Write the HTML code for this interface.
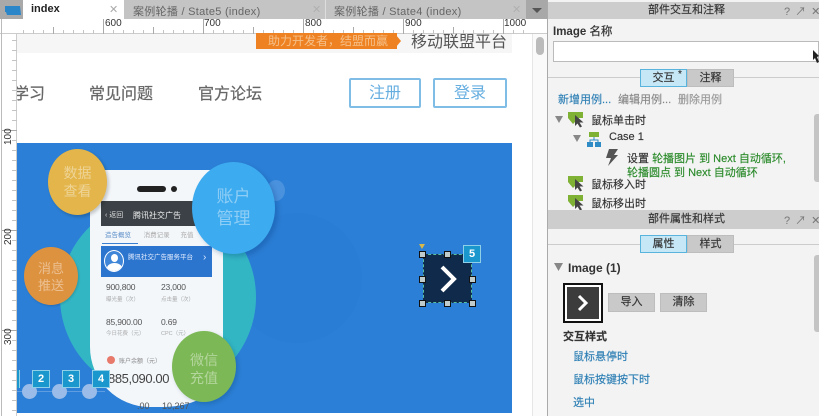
<!DOCTYPE html>
<html><head><meta charset="utf-8">
<style>
html,body{margin:0;padding:0}
body{width:819px;height:416px;overflow:hidden;position:relative;background:#fff;font-family:"Liberation Sans","Noto Sans CJK SC",sans-serif;color:#333}
.a{position:absolute;white-space:nowrap}
.c{border-radius:50%;position:absolute;color:rgba(255,255,255,.42);text-align:center}
.n{position:absolute;width:16px;height:16px;background:#1a97cc;border:1px solid #8fd0e8;color:#fff;font:bold 11px/16px "Liberation Sans",sans-serif;text-align:center}
.t{position:absolute;color:#333;font-size:10px}
.h{position:absolute;width:5px;height:5px;background:#c0cccc;border:1px solid #111}
.ln{position:absolute;color:#2d7fb5;font-size:11px;white-space:nowrap;-webkit-text-stroke:.15px #2d7fb5}
.tx{position:absolute;font-size:11px;color:#333;white-space:nowrap;-webkit-text-stroke:.15px}
.btn{position:absolute;background:#c9c9c9;border:1px solid #bdbdbd;box-sizing:border-box;text-align:center;font-size:11px;color:#333;-webkit-text-stroke:.15px}
.sel{background:#c6e7f5;border:1px solid #58b4dc}
.tab{position:absolute;top:3px;font-size:11px;color:#666;letter-spacing:.28px;white-space:nowrap}
.nav{position:absolute;top:80px;font-size:16px;color:#666;white-space:nowrap;-webkit-text-stroke:.2px #666}
.num{position:absolute;font-size:8.5px;color:#555;letter-spacing:-.2px}
.lab{position:absolute;font-size:5.5px;color:#aaa}
</style></head><body>

<!-- tabs -->
<div class="a" style="left:0;top:0;width:547px;height:19px;background:#c4c4c4"></div>
<div class="a" style="left:0;top:0;width:23px;height:19px;background:#a9a9a9"></div>
<svg class="a" style="left:5px;top:5px" width="17" height="11"><path d="M0 1h15l1 9H2l-1-3H0z" fill="#2a86c8"/></svg>
<div class="a" style="left:23px;top:0;width:101px;height:19px;background:#fff"></div>
<div class="a" style="left:31px;top:3px;font-size:11px;font-weight:bold;color:#222">index</div>
<div class="a" style="left:109px;top:3px;font-size:11px;color:#aaa">✕</div>
<div class="tab" style="left:133px">案例轮播 / State5 (index)</div>
<div class="a" style="left:312px;top:3px;font-size:11px;color:#b0b0b0">✕</div>
<div class="a" style="left:325px;top:0;width:1px;height:19px;background:#ddd"></div>
<div class="tab" style="left:334px">案例轮播 / State4 (index)</div>
<div class="a" style="left:512px;top:3px;font-size:11px;color:#b0b0b0">✕</div>
<div class="a" style="left:526px;top:0;width:21px;height:19px;background:#a8a8a8"></div>
<div class="a" style="left:532px;top:8px;border:5px solid transparent;border-top:5px solid #555;border-bottom:0"></div>

<!-- rulers -->
<div class="a" style="left:0;top:19px;width:547px;height:15px;background:#fff;border-bottom:1px solid #ccc;box-sizing:border-box"></div>
<svg class="a" style="left:0;top:19px" width="532" height="15">
<defs><pattern id="px" x="3" y="0" width="10" height="15" patternUnits="userSpaceOnUse"><path d="M.5 11v4" stroke="#c4c4c4"/></pattern></defs>
<rect x="17" width="515" height="15" fill="url(#px)"/>
<g stroke="#aaa" fill="none">
<path d="M103.500 0v15M203.500 0v15M303.500 0v15M403.500 0v15M503.500 0v15M53.500 8v7M153.500 8v7M253.500 8v7M353.500 8v7M453.500 8v7"/>
</g></svg>
<div class="t" style="left:105px;top:18px">600</div>
<div class="t" style="left:204px;top:18px">700</div>
<div class="t" style="left:305px;top:18px">800</div>
<div class="t" style="left:405px;top:18px">900</div>
<div class="t" style="left:504px;top:18px">1000</div>
<div class="a" style="left:0;top:34px;width:17px;height:382px;background:#fff;border-right:1px solid #ccc;box-sizing:border-box"></div>
<div class="a" style="left:1px;top:19px;width:1px;height:397px;background:#bbb"></div>
<svg class="a" style="left:2px;top:34px" width="15" height="382">
<defs><pattern id="py" x="0" y="6" width="15" height="10" patternUnits="userSpaceOnUse"><path d="M10 .5h5" stroke="#c4c4c4"/></pattern></defs>
<rect width="15" height="382" fill="url(#py)"/>
<g stroke="#aaa"><path d="M0 96.500h15M0 196.500h15M0 296.500h15"/></g></svg>
<div class="t" style="left:-1px;top:129px;transform:rotate(-90deg);width:20px;height:12px">100</div>
<div class="t" style="left:-1px;top:229px;transform:rotate(-90deg);width:20px;height:12px">200</div>
<div class="t" style="left:-1px;top:329px;transform:rotate(-90deg);width:20px;height:12px">300</div>

<!-- canvas top -->
<div class="a" style="left:17px;top:34px;width:495px;height:19px;background:#f6f6f6"></div>
<div class="a" style="left:256px;top:33px;width:141px;height:16px;background:#ee8222;color:#f5c08a;font-size:12px;line-height:16px;text-indent:12px">助力开发者，结盟而赢</div>
<div class="a" style="left:396px;top:35px;width:0;height:0;border:6px solid transparent;border-left:5px solid #ee8222"></div>
<div class="a" style="left:411px;top:28px;font-size:16px;color:#555">移动联盟平台</div>
<div class="nav" style="left:17px;width:28px;overflow:hidden;direction:rtl">学习</div>
<div class="nav" style="left:89px">常见问题</div>
<div class="nav" style="left:198px">官方论坛</div>
<div class="a" style="left:349px;top:78px;width:72px;height:30px;box-sizing:border-box;border:2px solid #80bde6;border-radius:2px;text-align:center;line-height:27px;font-size:16px;color:#66aee0">注册</div>
<div class="a" style="left:433px;top:78px;width:74px;height:30px;box-sizing:border-box;border:2px solid #80bde6;border-radius:2px;text-align:center;line-height:27px;font-size:16px;color:#66aee0">登录</div>

<!-- banner -->
<div class="a" style="left:17px;top:143px;width:495px;height:270px;background:#2b7fd6;overflow:hidden">
  <div class="a" style="left:215px;top:70px;width:130px;height:130px;border-radius:50%;background:#2a7dd4"></div>
  <div class="a" style="left:43px;top:56px;width:196px;height:196px;border-radius:50%;background:#33b6c4"></div>
  <div class="a" style="left:73px;top:27px;width:133px;height:237px;background:#f3f7fa;border-radius:14px 14px 60px 60px/14px 14px 37px 60px"></div>
  <div class="a" style="left:120px;top:43px;width:29px;height:6px;border-radius:3px;background:#222"></div>
  <div class="a" style="left:154px;top:43px;width:6px;height:6px;border-radius:3px;background:#222"></div>
  <div class="a" style="left:84px;top:58px;width:111px;height:25px;background:#3b4146"></div>
  <div class="a" style="left:88px;top:68px;font-size:7px;color:#ddd;line-height:10px">‹ 返回</div>
  <div class="a" style="left:116px;top:68px;font-size:8px;color:#eee;line-height:10px">腾讯社交广告</div>
  <div class="a" style="left:88px;top:86px;font-size:6.500px;color:#5a8cc8">造告概览 &nbsp; &nbsp; &nbsp; <span style="color:#aaa">消费记录 &nbsp; &nbsp; &nbsp;充值</span></div>
  <div class="a" style="left:85px;top:100px;width:36px;height:1px;background:#3b7fd0"></div>
  <div class="a" style="left:84px;top:103px;width:111px;height:31px;background:#2c75cf"></div>
  <div class="a" style="left:111px;top:103px;color:#e8f0ff;font-size:6.500px;line-height:24px">腾讯社交广告服务平台</div>
  <div class="a" style="left:186px;top:109px;color:#dce8ff;font-size:10px">›</div>
  <div class="a" style="left:87px;top:107px;width:18px;height:20px;border-radius:50%;border:1.5px solid #fff;background:#3f86d8;overflow:hidden">
    <div class="a" style="left:6px;top:3px;width:7px;height:8px;border-radius:50%;background:#fff"></div>
    <div class="a" style="left:2px;top:12px;width:15px;height:10px;border-radius:50%;background:#fff"></div>
  </div>
  <div class="num" style="left:89px;top:139px">900,800</div>
  <div class="num" style="left:144px;top:139px">23,000</div>
  <div class="lab" style="left:89px;top:152px">曝光量（次）</div>
  <div class="lab" style="left:144px;top:152px">点击量（次）</div>
  <div class="num" style="left:89px;top:174px">85,900.00</div>
  <div class="num" style="left:144px;top:174px">0.69</div>
  <div class="lab" style="left:89px;top:186px">今日花费（元）</div>
  <div class="lab" style="left:144px;top:186px">CPC（元）</div>
  <div class="a" style="left:90px;top:213px;width:8px;height:8px;border-radius:50%;background:#e87a6c"></div>
  <div class="a" style="left:102px;top:213px;font-size:6px;color:#888">账户余额（元）</div>
  <div class="a" style="left:91px;top:227px;font-size:13px;color:#444;line-height:18px;letter-spacing:-.4px">885,090.00</div>
  <div class="a" style="left:120px;top:258px;font-size:9px;color:#555">.00 &nbsp; &nbsp; 10,267</div>
  <div class="a" style="left:250px;top:37px;width:18px;height:21px;border-radius:50%;background:#4a92de"></div>
  <div class="c" style="left:31px;top:6px;width:59px;height:66px;background:#e3b54a;font-size:14px;line-height:18px;box-shadow:2px 2px 3px rgba(0,0,0,.2)"><div style="margin-top:15px">数据<br>查看</div></div>
  <div class="c" style="left:7px;top:104px;width:54px;height:58px;background:#dd9240;font-size:13px;line-height:17px;box-shadow:1px 1px 2px rgba(0,0,0,.15)"><div style="margin-top:13px">消息<br>推送</div></div>
  <div class="c" style="left:175px;top:19px;width:83px;height:92px;background:#3dabef;font-size:17px;line-height:22px;box-shadow:3px 3px 5px rgba(0,50,120,.25)"><div style="margin-top:24px">账户<br>管理</div></div>
  <div class="c" style="left:155px;top:188px;width:64px;height:71px;background:#7db856;font-size:14px;line-height:18px;box-shadow:2px 2px 4px rgba(0,50,80,.2)"><div style="margin-top:20px">微信<br>充值</div></div>
  <div class="a" style="left:0;top:248px;width:88px;height:1px;background:#5f9de0"></div>
  <div class="a" style="left:5px;top:241px;width:15px;height:15px;border-radius:50%;background:#9bbce8"></div>
  <div class="a" style="left:35px;top:241px;width:15px;height:15px;border-radius:50%;background:#9bbce8"></div>
  <div class="a" style="left:65px;top:241px;width:15px;height:15px;border-radius:50%;background:#9bbce8"></div>
</div>

<div class="a" style="left:17px;top:370px;width:2px;height:18px;background:#1a97cc;border-right:1px solid #8fd0e8"></div>
<div class="n" style="left:32px;top:370px">2</div>
<div class="n" style="left:62px;top:370px">3</div>
<div class="n" style="left:92px;top:370px">4</div>

<!-- selected widget -->
<div class="a" style="left:423px;top:254px;width:49px;height:49px;background:#0f2a4a;box-sizing:border-box;border:1px dashed #57c0a0"></div>
<svg class="a" style="left:423px;top:254px" width="49" height="49"><path d="M19 13l12 12-12 12" fill="none" stroke="#fff" stroke-width="4"/></svg>
<div class="h" style="left:419px;top:251px"></div>
<div class="h" style="left:444px;top:251px"></div>
<div class="h" style="left:469px;top:276px"></div>
<div class="h" style="left:419px;top:276px"></div>
<div class="h" style="left:419px;top:300px"></div>
<div class="h" style="left:444px;top:300px"></div>
<div class="h" style="left:469px;top:300px"></div>
<div class="a" style="left:419px;top:244px;width:0;height:0;border:3px solid transparent;border-top:5px solid #d8b84a;border-bottom:0"></div>
<div class="n" style="left:463px;top:245px">5</div>

<!-- scrollbar -->
<div class="a" style="left:532px;top:34px;width:15px;height:382px;background:#fafafa;border-left:1px solid #e6e6e6;box-sizing:border-box"></div>
<div class="a" style="left:536px;top:37px;width:8px;height:18px;background:#bbb;border-radius:4px"></div>

<!-- right panel -->
<div class="a" style="left:547px;top:0;width:272px;height:416px;background:#f3f3f3;border-left:1px solid #aaa;box-sizing:border-box"></div>
<div class="a" style="left:548px;top:2px;width:271px;height:17px;background:#cdcdcd;text-align:center;font-size:11px;line-height:17px;color:#333;padding-left:6px;box-sizing:border-box;-webkit-text-stroke:.15px">部件交互和注释</div>
<div class="a" style="left:784px;top:3px;font-size:11px;color:#777;letter-spacing:5px">?↗✕</div>
<div class="a" style="left:553px;top:23px;font-size:11.500px;font-weight:bold;color:#333">Image <span style="font-weight:normal;-webkit-text-stroke:.2px">名称</span></div>
<div class="a" style="left:553px;top:41px;width:266px;height:21px;background:#fff;border:1px solid #bbb;box-sizing:border-box"></div>
<svg class="a" style="left:813px;top:50px" width="6" height="14"><path d="M0 0l6 6-2 1 2 5-2 1-2-5-2 2z" fill="#222"/></svg>
<div class="a" style="left:548px;top:77px;width:271px;height:1px;background:#ccc"></div>
<div class="btn sel" style="left:640px;top:69px;width:47px;height:18px;line-height:16px">交互<span style="position:absolute;left:37px;top:-3px;font-size:10px">*</span></div>
<div class="btn" style="left:687px;top:69px;width:47px;height:18px;line-height:16px">注释</div>
<div class="ln" style="left:558px;top:91px">新增用例...</div>
<div class="tx" style="left:618px;top:91px;color:#888">编辑用例...</div>
<div class="tx" style="left:678px;top:91px;color:#999">删除用例</div>

<div class="a" style="left:814px;top:114px;width:5px;height:68px;background:#c4c4c4;border-radius:3px 0 0 3px"></div>

<svg class="a" style="left:555px;top:112px" width="30" height="16"><path d="M0 4h8L4 11z" fill="#888"/><path d="M13 0h15v6h-4l-6 6-5-6z" fill="#7fb135"/><path d="M20 3v11l2.500-2.500 2.500 4 2-1-2.500-4h4z" fill="#444"/></svg>
<div class="tx" style="left:591px;top:112px">鼠标单击时</div>
<svg class="a" style="left:572px;top:131px" width="32" height="17"><path d="M1 4h8L5 11z" fill="#888"/><path d="M17 1h10v5H17z" fill="#7fb135"/><path d="M22 6v3M18 12V9h8v3" fill="none" stroke="#2e8bc6"/><path d="M15 11h6v5h-6zM23 11h6v5h-6z" fill="#2e8bc6"/></svg>
<div class="tx" style="left:609px;top:131px">Case 1</div>
<svg class="a" style="left:605px;top:149px" width="14" height="18"><path d="M4 0h9L9 6h4L3 17l3-8H1z" fill="#555"/></svg>
<div class="tx" style="left:627px;top:150px">设置 <span style="color:#2a8a2a">轮播图片 到 Next 自动循环,</span></div>
<div class="tx" style="left:627px;top:164px;color:#2a8a2a">轮播圆点 到 Next 自动循环</div>
<svg class="a" style="left:568px;top:176px" width="17" height="16"><path d="M0 0h15v6h-4l-6 6-5-6z" fill="#7fb135"/><path d="M7 3v11l2.500-2.500 2.500 4 2-1-2.500-4h4z" fill="#444"/></svg>
<div class="tx" style="left:591px;top:176px">鼠标移入时</div>
<svg class="a" style="left:568px;top:195px" width="17" height="15"><path d="M0 0h15v6h-4l-6 6-5-6z" fill="#7fb135"/><path d="M7 3v11l2.500-2.500 2.500 4 2-1-2.500-4h4z" fill="#444"/></svg>
<div class="tx" style="left:591px;top:195px">鼠标移出时</div>

<div class="a" style="left:548px;top:210px;width:271px;height:19px;background:#cdcdcd;text-align:center;font-size:11px;line-height:19px;color:#333;padding-left:6px;box-sizing:border-box;-webkit-text-stroke:.15px">部件属性和样式</div>
<div class="a" style="left:784px;top:212px;font-size:11px;color:#777;letter-spacing:5px">?↗✕</div>
<div class="a" style="left:548px;top:244px;width:271px;height:1px;background:#ccc"></div>
<div class="btn sel" style="left:640px;top:235px;width:47px;height:18px;line-height:16px">属性</div>
<div class="btn" style="left:687px;top:235px;width:47px;height:18px;line-height:16px">样式</div>

<svg class="a" style="left:554px;top:263px" width="10" height="9"><path d="M0 0h9L4.500 8z" fill="#888"/></svg>
<div class="a" style="left:568px;top:261px;font-size:12px;font-weight:bold;color:#333">Image (1)</div>
<div class="a" style="left:563px;top:283px;width:40px;height:40px;box-sizing:border-box;border:2px solid #111;background:#fff"></div>
<div class="a" style="left:567px;top:287px;width:32px;height:32px;background:#3c3c3c"></div>
<svg class="a" style="left:567px;top:287px" width="32" height="32"><path d="M12 9l7 7-7 7" fill="none" stroke="#fff" stroke-width="3"/></svg>
<div class="btn" style="left:608px;top:293px;width:47px;height:19px;line-height:17px">导入</div>
<div class="btn" style="left:660px;top:293px;width:47px;height:19px;line-height:17px">清除</div>
<div class="tx" style="left:563px;top:328px;font-weight:bold">交互样式</div>
<div class="ln" style="left:573px;top:348px">鼠标悬停时</div>
<div class="ln" style="left:573px;top:371px">鼠标按键按下时</div>
<div class="ln" style="left:573px;top:394px">选中</div>
<div class="a" style="left:814px;top:255px;width:5px;height:77px;background:#c4c4c4;border-radius:3px 0 0 3px"></div>
</body></html>
